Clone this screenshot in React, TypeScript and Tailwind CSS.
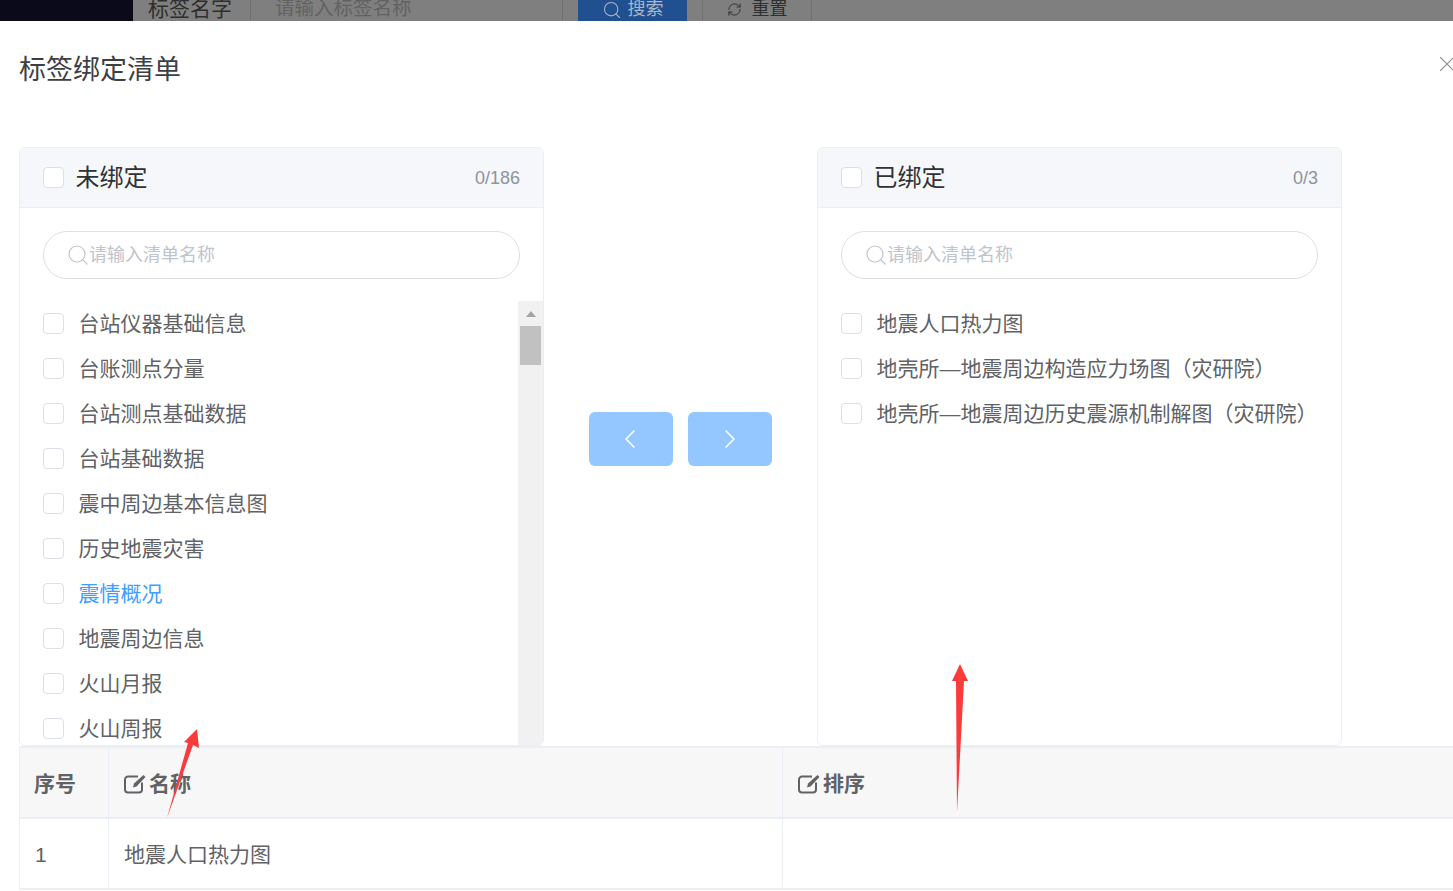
import { ChevronLeft, ChevronRight, RefreshCw, Search, X } from "lucide-react";

const FONT = "[font-family:'Liberation_Sans','Noto_Sans_CJK_SC',sans-serif]";

const unbound = [
  "台站仪器基础信息",
  "台账测点分量",
  "台站测点基础数据",
  "台站基础数据",
  "震中周边基本信息图",
  "历史地震灾害",
  "震情概况",
  "地震周边信息",
  "火山月报",
  "火山周报",
  "火山日报",
];

const bound = [
  "地震人口热力图",
  "地壳所—地震周边构造应力场图（灾研院）",
  "地壳所—地震周边历史震源机制解图（灾研院）",
];

function Checkbox() {
  return <span className="w-[21px] h-[21px] shrink-0 rounded-[4px] border border-[#dcdfe6] bg-white" />;
}

function EditIcon() {
  return (
    <svg width="22" height="20" viewBox="0 0 22 20" fill="none" className="shrink-0">
      <path d="M14 2.500H4a3 3 0 0 0-3 3v10a3 3 0 0 0 3 3h11a3 3 0 0 0 3-3V8.500" stroke="#606266" strokeWidth="2" />
      <path d="M9 13.500l1-4L19.500 1l2 2-9 9.500z" fill="#606266" />
    </svg>
  );
}

function TransferPanel({
  title,
  count,
  items,
  scroll,
}: {
  title: string;
  count: string;
  items: string[];
  scroll?: boolean;
}) {
  return (
    <div className="w-[525px] h-[599px] shrink-0 flex flex-col rounded-[6px] border border-[#ebeef5] overflow-hidden">
      <div className="h-[60px] shrink-0 flex items-center px-[23px] bg-[#f5f7fa] border-b border-[#ebeef5]">
        <Checkbox />
        <span className="ml-[11.5px] text-[24px] leading-none text-[#303133]">{title}</span>
        <span className="ml-auto text-[18px] leading-none text-[#909399]">{count}</span>
      </div>
      <div className="mx-[23px] mt-[23px] h-[48px] shrink-0 flex items-center pl-[22px] rounded-full border border-[#dcdfe6]">
        <Search size={24} strokeWidth={1.2} className="text-[#c0c4cc] shrink-0" />
        <span className="ml-[-1px] text-[18px] leading-none text-[#c0c4cc]">请输入清单名称</span>
      </div>
      <div className="mt-[22px] flex-1 min-h-0 flex overflow-hidden">
        <div className="flex-1 min-w-0">
          {items.map((item) => (
            <div key={item} className="h-[45px] flex items-center pl-[23px]">
              <Checkbox />
              <span className={`ml-[14.5px] text-[21px] leading-none whitespace-nowrap ${item === "震情概况" ? "text-[#409eff]" : "text-[#606266]"}`}>
                {item}
              </span>
            </div>
          ))}
        </div>
        {scroll && (
          <div className="w-[25px] shrink-0 flex flex-col items-center bg-[#f1f1f1]">
            <span className="mt-[10px] w-0 h-0 border-x-[5.5px] border-x-transparent border-b-[6px] border-b-[#a3a3a3]" />
            <span className="mt-[9px] w-[21px] h-[39px] bg-[#c1c1c1]" />
          </div>
        )}
      </div>
    </div>
  );
}

export default function App() {
  return (
    <div className={`relative w-full h-[891px] overflow-hidden bg-white ${FONT}`}>
      {/* page behind the dialog, dimmed by the mask */}
      <div className="h-[21px] flex bg-[#7f7f7f] overflow-hidden">
        <div className="w-[133px] bg-[#0a0a1a]" />
        <div className="w-[118px] pl-[15px] border-r border-[#707070] text-[21px] leading-[17px] text-[#2e2e2e] whitespace-nowrap">标签名字</div>
        <div className="w-[312px] pl-[24px] border-r border-[#707070] text-[19.5px] leading-[17px] text-[#626262] whitespace-nowrap">请输入标签名称</div>
        <div className="ml-[15px] w-[109px] flex items-start justify-center gap-[6px] bg-[#20508f] text-[18px] leading-[19px] text-[#a9b6c9]">
          <Search size={20} strokeWidth={1.3} />
          <span>搜索</span>
        </div>
        <div className="ml-[15px] w-[110px] flex items-start justify-center gap-[10px] border-x border-[#707070] text-[18px] leading-[19px] text-[#2e2e2e]">
          <RefreshCw size={15} strokeWidth={1.5} className="mt-[2px]" />
          <span>重置</span>
        </div>
      </div>

      {/* dialog */}
      <div className="w-[1480px] pl-[19px]">
        <div className="h-[126px] flex items-start">
          <h2 className="mt-[34px] text-[27px] leading-[30px] font-normal text-[#3d3f44]">标签绑定清单</h2>
          <X size={26} strokeWidth={1} className="ml-[1253px] mt-[30px] text-[#909399] shrink-0" />
        </div>

        <div className="flex items-stretch">
          <TransferPanel title="未绑定" count="0/186" items={unbound} scroll />
          <div className="w-[273px] shrink-0 flex items-center justify-center gap-[15px] pb-[16px]">
            <button className="w-[84px] h-[54px] flex items-center justify-center rounded-[6px] bg-[#94c6ff] text-white">
              <ChevronLeft size={32} strokeWidth={1.1} className="mr-[2px]" />
            </button>
            <button className="w-[84px] h-[54px] flex items-center justify-center rounded-[6px] bg-[#94c6ff] text-white">
              <ChevronRight size={32} strokeWidth={1.1} />
            </button>
          </div>
          <TransferPanel title="已绑定" count="0/3" items={bound} />
        </div>

        <div className="grid grid-cols-[89px_674px_1fr] border-l border-t-2 border-[#ebeef5] text-[21px] text-[#606266]">
          <div className="h-[71px] flex items-center pl-[14px] pt-[2px] bg-[#f7f7f7] border-r border-b-2 border-[#ebeef5] font-bold">序号</div>
          <div className="h-[71px] flex items-center gap-[3px] pl-[15px] pt-[2px] bg-[#f7f7f7] border-r border-b-2 border-[#ebeef5] font-bold">
            <EditIcon />
            名称
          </div>
          <div className="h-[71px] flex items-center gap-[3px] pl-[15px] pt-[2px] bg-[#f7f7f7] border-b-2 border-[#ebeef5] font-bold">
            <EditIcon />
            排序
          </div>
          <div className="h-[71px] flex items-center pl-[15px] pt-[2px] border-r border-b-2 border-[#ebeef5]">1</div>
          <div className="h-[71px] flex items-center pl-[15px] pt-[2px] border-r border-b-2 border-[#ebeef5]">地震人口热力图</div>
          <div className="h-[71px] border-b-2 border-[#ebeef5]" />
        </div>
      </div>

      {/* red annotation arrows drawn on top of the dialog */}
      <svg className="absolute left-0 top-0 pointer-events-none" width="1453" height="891" viewBox="0 0 1453 891">
        <polygon points="167,818 188,743 184,742 197,729 199,748 193,745" fill="#fb3a3a" />
        <polygon points="957,812 956,681 952,681 960,664 968,681 964,681" fill="#fb3a3a" />
      </svg>
    </div>
  );
}
